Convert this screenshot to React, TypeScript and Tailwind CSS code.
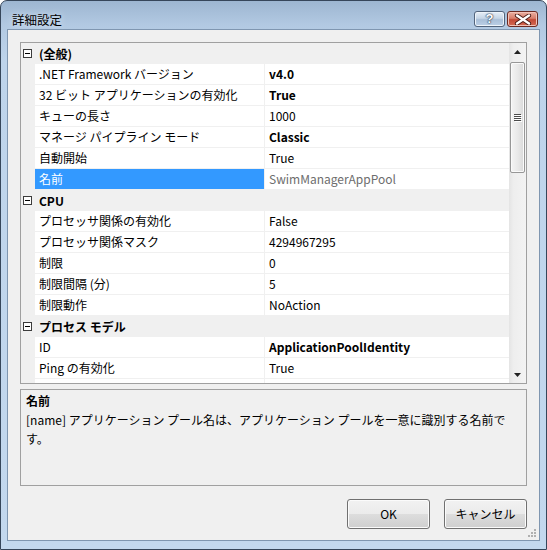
import React from 'react';

type Row =
  | { cat: string }
  | { name: string; value: string; bold?: boolean; selected?: boolean; readOnly?: boolean };

const rows: Row[] = [
  { cat: '(全般)' },
  { name: '.NET Framework バージョン', value: 'v4.0', bold: true },
  { name: '32 ビット アプリケーションの有効化', value: 'True', bold: true },
  { name: 'キューの長さ', value: '1000' },
  { name: 'マネージ パイプライン モード', value: 'Classic', bold: true },
  { name: '自動開始', value: 'True' },
  { name: '名前', value: 'SwimManagerAppPool', selected: true, readOnly: true },
  { cat: 'CPU' },
  { name: 'プロセッサ関係の有効化', value: 'False' },
  { name: 'プロセッサ関係マスク', value: '4294967295' },
  { name: '制限', value: '0' },
  { name: '制限間隔 (分)', value: '5' },
  { name: '制限動作', value: 'NoAction' },
  { cat: 'プロセス モデル' },
  { name: 'ID', value: 'ApplicationPoolIdentity', bold: true },
  { name: 'Ping の有効化', value: 'True' },
  // only a sliver of the next row shows under the fold
  { name: '', value: '' },
];

const Expander = () => (
  <span className="flex h-[9px] w-[9px] items-center justify-center border border-[#3c3c3c] bg-white">
    <span className="h-px w-[5px] bg-black" />
  </span>
);

const GridRow = ({ row }: { row: Row }) => {
  if ('cat' in row) {
    return (
      <div className="flex h-[21px] shrink-0 items-center bg-[#f0f0f0]">
        <div className="ml-[2px]">
          <Expander />
        </div>
        <span className="ml-[7px] font-bold leading-[20px]">{row.cat}</span>
      </div>
    );
  }
  return (
    <div className="flex h-[21px] shrink-0 bg-[#f0f0f0] pb-px">
      <div className="w-[14px] shrink-0" />
      <div
        className={
          row.selected
            ? 'w-[229px] shrink-0 truncate bg-[#3399ff] pl-[4px] leading-[20px] text-white'
            : 'w-[229px] shrink-0 truncate bg-white pl-[4px] leading-[20px]'
        }
      >
        {row.name}
      </div>
      <div
        className={
          row.readOnly
            ? 'ml-px flex-1 truncate bg-white pl-[4px] leading-[20px] text-[#6d6d6d]'
            : row.bold
            ? 'ml-px flex-1 truncate bg-white pl-[4px] font-bold leading-[20px]'
            : 'ml-px flex-1 truncate bg-white pl-[4px] leading-[20px]'
        }
      >
        {row.value}
      </div>
    </div>
  );
};

const Arrow = ({ down }: { down?: boolean }) => (
  <svg width="7" height="4" viewBox="0 0 7 4">
    {down ? <polygon points="0,0 7,0 3.5,4" fill="#222" /> : <polygon points="3.5,0 7,4 0,4" fill="#222" />}
  </svg>
);

const ScrollBar = () => (
  <div className="flex w-[17px] shrink-0 flex-col bg-[linear-gradient(90deg,#e4e4e4,#eeeeee_25%,#f3f3f3)]">
    <div className="flex h-[17px] shrink-0 items-center justify-center">
      <Arrow />
    </div>
    <div className="flex-1 pt-[2px]">
      <div className="mx-px flex h-[111px] items-center justify-center rounded-[2px] border border-[#979797] bg-[linear-gradient(90deg,#f4f4f4,#e9e9e9_50%,#d9d9d9)] shadow-[inset_0_0_0_1px_#fafafa]">
        <svg width="8" height="8" viewBox="0 0 8 8">
          <rect x="0" y="0" width="7" height="1" fill="#4b4b4b" />
          <rect x="0" y="2" width="7" height="1" fill="#4b4b4b" />
          <rect x="0" y="4" width="7" height="1" fill="#4b4b4b" />
          <rect x="0" y="6" width="7" height="1" fill="#4b4b4b" />
          <rect x="1" y="1" width="7" height="1" fill="#ffffff" />
          <rect x="1" y="3" width="7" height="1" fill="#ffffff" />
          <rect x="1" y="5" width="7" height="1" fill="#ffffff" />
          <rect x="1" y="7" width="7" height="1" fill="#ffffff" />
        </svg>
      </div>
    </div>
    <div className="flex h-[17px] shrink-0 items-center justify-center">
      <Arrow down />
    </div>
  </div>
);

const DialogButton = ({ label }: { label: string }) => (
  <button className="flex h-[30px] w-[83px] items-center justify-center rounded-[3px] border border-[#707070] bg-[linear-gradient(#f2f2f2_0%,#ebebeb_50%,#dddddd_50%,#cfcfcf_100%)] text-[12px] text-black shadow-[inset_0_0_0_1px_#fbfbfb]">
    {label}
  </button>
);

export default function App() {
  return (
    <div className="h-[550px] w-[547px] bg-white font-['Noto_Sans_CJK_JP','Noto_Sans',sans-serif] text-[12px] text-black">
      <div className="flex h-full flex-col overflow-hidden rounded-t-[7px] border border-[#36465a] bg-[linear-gradient(180deg,#9db6d1_0px,#b2c9e2_24px,#bed4eb_60px,#c3d8ee_100%)]">
        <div className="flex h-[28px] shrink-0 justify-between">
          <span className="pl-[11px] pt-[10px] text-[12.5px] leading-[18px] text-black [text-shadow:0_0_6px_#e8f1fb]">
            詳細設定
          </span>
          <div className="mr-[8px] mt-[10px] flex gap-[2px]">
            <div className="flex h-[16px] w-[31px] items-center justify-center rounded-[3px] border border-[#52647c] bg-[linear-gradient(#e6eef7_0%,#c6d6e7_45%,#a9bfd8_55%,#bcd0e6_100%)] shadow-[inset_0_0_0_1px_#eef4fa]">
              <span className="font-['Liberation_Sans',sans-serif] text-[13px] font-bold leading-[14px] text-white [text-shadow:0_0_1px_#33435a,0_0_1px_#33435a,0_0_2px_#33435a]">
                ?
              </span>
            </div>
            <div className="flex h-[16px] w-[31px] items-center justify-center rounded-[3px] border border-[#6b2a22] bg-[linear-gradient(#eab0a2_0%,#d87f6c_45%,#c24a36_55%,#d36a54_100%)] shadow-[inset_0_0_0_1px_#f0c2b7]">
              <svg width="18" height="11" viewBox="0 0 18 11">
                <path d="M3 1.5 L15 9.5 M15 1.5 L3 9.5" stroke="#4a1a14" strokeWidth="4.2" strokeLinecap="round" />
                <path d="M3 1.5 L15 9.5 M15 1.5 L3 9.5" stroke="#ffffff" strokeWidth="2.4" strokeLinecap="round" />
              </svg>
            </div>
          </div>
        </div>

        <div className="mx-[6px] flex flex-1 flex-col">
          <div className="relative flex flex-1 flex-col border border-[#7f96b0] bg-[#f0f0f0] px-[12px] pt-[12px]">
            <div className="flex h-[342px] shrink-0 border border-[#a0a0a0] bg-[#f0f0f0]">
              <div className="flex h-[340px] flex-1 flex-col overflow-hidden">
                {rows.map((r, i) => (
                  <GridRow key={i} row={r} />
                ))}
              </div>
              <ScrollBar />
            </div>

            <div className="mt-[5px] h-[97px] shrink-0 border border-[#a0a0a0] bg-[#f0f0f0] px-[5px] pt-[1px] leading-[19px]">
              <div className="font-bold">名前</div>
              <div>
                [name] アプリケーション プール名は、アプリケーション プールを一意に識別する名前で
                <br />
                す。
              </div>
            </div>

            <div className="mt-[13px] flex justify-end gap-[14px]">
              <DialogButton label="OK" />
              <DialogButton label="キャンセル" />
            </div>

            <svg className="absolute bottom-[2px] right-[2px]" width="10" height="10" viewBox="0 0 10 10">
              <rect x="7" y="1" width="2" height="2" fill="#b0b0b0" />
              <rect x="7" y="4" width="2" height="2" fill="#b0b0b0" />
              <rect x="4" y="4" width="2" height="2" fill="#b0b0b0" />
              <rect x="7" y="7" width="2" height="2" fill="#b0b0b0" />
              <rect x="4" y="7" width="2" height="2" fill="#b0b0b0" />
              <rect x="1" y="7" width="2" height="2" fill="#b0b0b0" />
            </svg>
          </div>
          <div className="h-[8px] shrink-0" />
        </div>
      </div>
    </div>
  );
}
